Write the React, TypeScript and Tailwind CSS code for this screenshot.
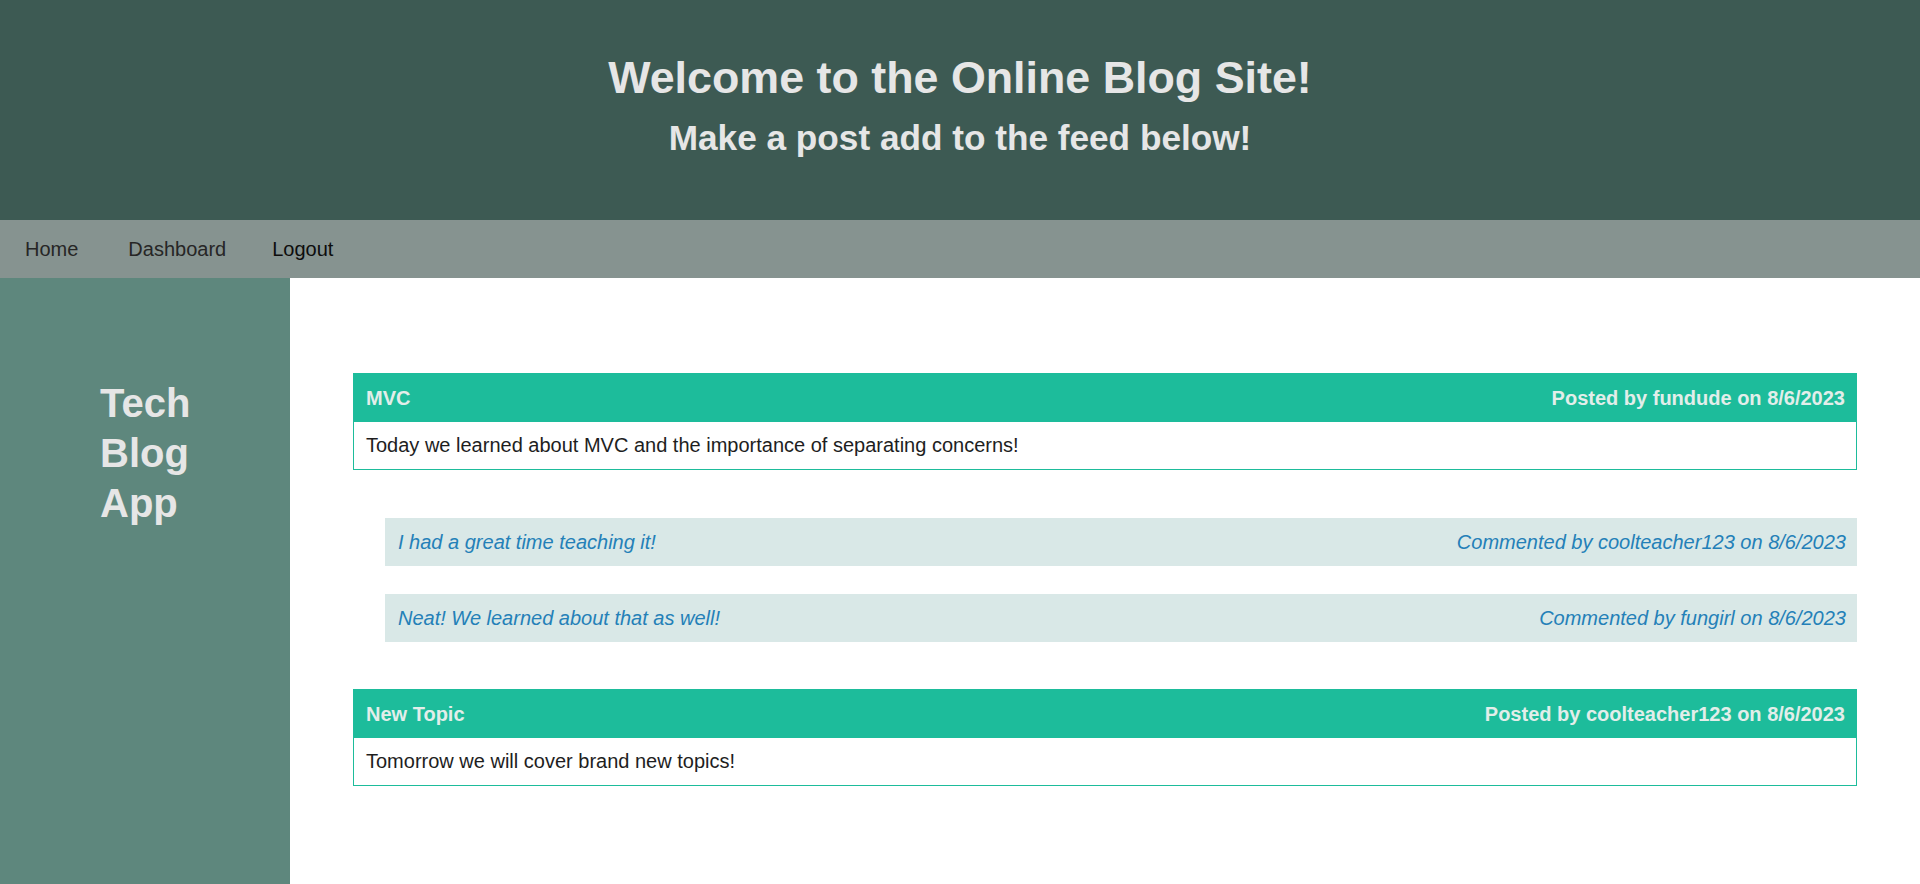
const posts = [
  {
    title: "MVC",
    author: "fundude",
    date: "8/6/2023",
    body: "Today we learned about MVC and the importance of separating concerns!",
    comments: [
      { text: "I had a great time teaching it!", author: "coolteacher123", date: "8/6/2023" },
      { text: "Neat! We learned about that as well!", author: "fungirl", date: "8/6/2023" },
    ],
  },
  {
    title: "New Topic",
    author: "coolteacher123",
    date: "8/6/2023",
    body: "Tomorrow we will cover brand new topics!",
    comments: [],
  },
];

function Post({ post }: { post: (typeof posts)[number] }) {
  return (
    <div className="mb-[47px]">
      {/* post card */}
      <div className="border border-[#1dbc9b]">
        <div className="flex h-[48px] items-center justify-between bg-[#1dbc9b] pr-[11px] pl-3 text-[20px] font-bold text-[#e2eeea]">
          <span>{post.title}</span>
          <span>
            Posted by {post.author} on {post.date}
          </span>
        </div>
        <div className="flex h-[47px] items-center px-3 pb-px text-[20px] text-[#1e1e1e]">{post.body}</div>
      </div>

      {post.comments.length > 0 && (
        <div className="mt-[48px] ml-8 flex flex-col gap-[28px]">
          {post.comments.map((c) => (
            <div
              key={c.text}
              className="flex h-[48px] items-center justify-between bg-[#d9e8e7] pr-[11px] pl-[13px] text-[20px] italic text-[#2480b8]"
            >
              <span>{c.text}</span>
              <span>
                Commented by {c.author} on {c.date}
              </span>
            </div>
          ))}
        </div>
      )}
    </div>
  );
}

export default function App() {
  return (
    <div className="flex min-h-screen flex-col font-['Liberation_Sans',Arial,sans-serif]">
      {/* Header */}
      <header className="flex h-[220px] flex-col items-center bg-[#3d5a53] pt-[52px] text-[#e6e6e6]">
        <h1 className="text-[44.8px] font-bold leading-[50px]">Welcome to the Online Blog Site!</h1>
        <h2 className="mt-[16px] text-[35.2px] font-bold leading-[39px]">Make a post add to the feed below!</h2>
      </header>

      {/* Nav */}
      <nav className="flex h-[58px] items-center bg-[#869390] text-[20px]">
        <a href="#" className="px-[25px] text-[#262626]">
          Home
        </a>
        <a href="#" className="px-[25px] text-[#262626]">
          Dashboard
        </a>
        <button className="px-[21px] text-[#0d0d0d]">Logout</button>
      </nav>

      <div className="flex flex-1">
        {/* Sidebar */}
        <aside className="w-[290px] shrink-0 bg-[#5e877d] pt-[100px]">
          <h3 className="ml-[100px] w-[120px] text-[40px] font-bold leading-[50px] text-[#e6e6e6]">Tech Blog App</h3>
        </aside>

        {/* Feed */}
        <main className="flex-1 bg-white px-[63px] pt-[95px]">
          {posts.map((p) => (
            <Post key={p.title} post={p} />
          ))}
        </main>
      </div>
    </div>
  );
}
